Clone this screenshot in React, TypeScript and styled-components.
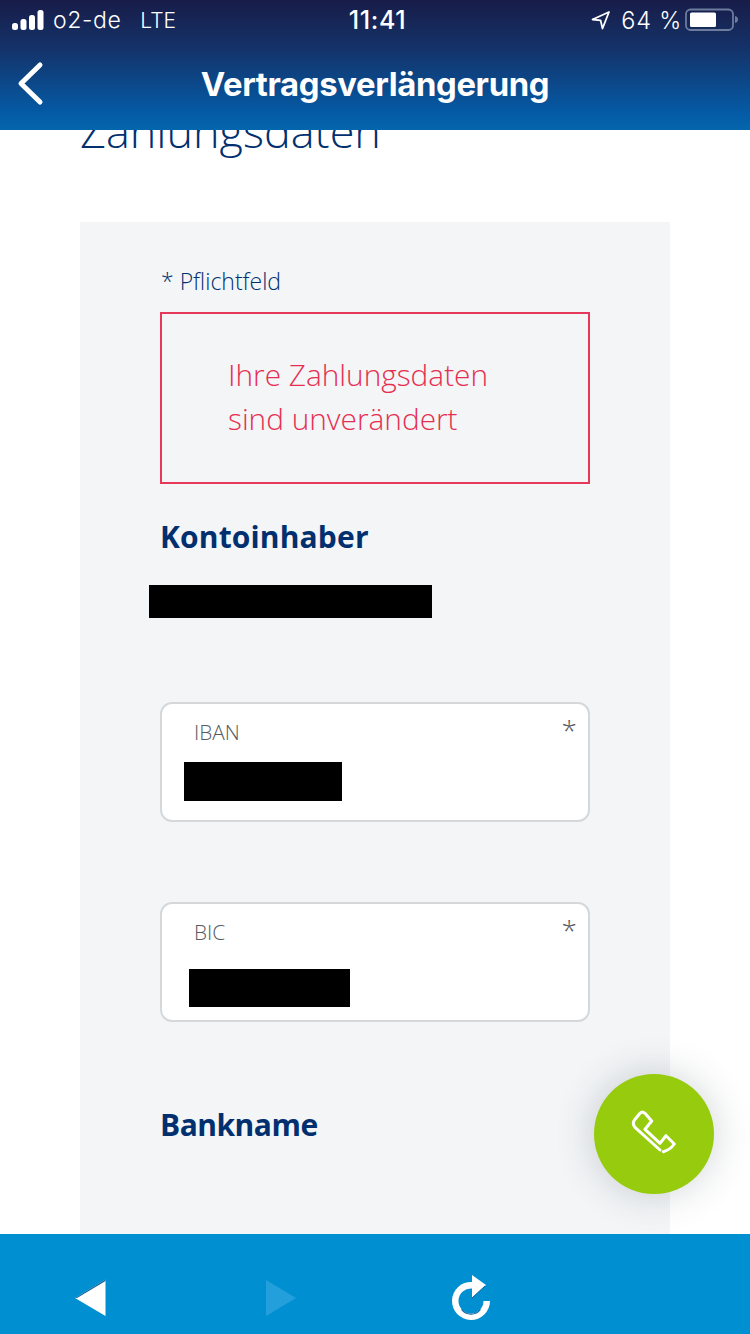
import * as React from "react";
import styled, { createGlobalStyle } from "styled-components";

const GlobalStyle = createGlobalStyle`
  html, body {
    margin: 0;
    padding: 0;
    background: #ffffff;
  }
`;

const Screen = styled.div`
  width: 750px;
  height: 1334px;
  display: flex;
  flex-direction: column;
  overflow: hidden;
  position: relative;
  font-family: "Open Sans", "Noto Sans", sans-serif;
`;

const Header = styled.header`
  height: 130px;
  flex: none;
  position: relative;
  z-index: 2;
  color: #ffffff;
  background: linear-gradient(180deg, #181c48 0%, #14336a 38%, #0559a3 85%, #0466ad 100%);
  font-family: Inter, "Liberation Sans", sans-serif;
`;

const StatusBar = styled.div`
  height: 40px;
  display: grid;
  grid-template-columns: 1fr auto 1fr;
  align-items: center;
  padding: 0 10px 0 12px;
`;

const StatusLeft = styled.div`
  display: flex;
  align-items: center;
`;

const StatusRight = styled.div`
  display: flex;
  align-items: center;
  justify-content: flex-end;
`;

const Carrier = styled.span`
  font-size: 23px;
  font-weight: 300;
  letter-spacing: 0.6px;
  margin-left: 9px;
`;

const Network = styled.span`
  font-size: 21px;
  font-weight: 300;
  margin-left: 19px;
`;

const Clock = styled.span`
  font-size: 25px;
  font-weight: 500;
  letter-spacing: 0.6px;
  margin-left: 3px;
`;

const Percent = styled.span`
  font-size: 23.5px;
  font-weight: 300;
  letter-spacing: 0.8px;
  margin: 0 3px 0 10px;
`;

const NavRow = styled.div`
  height: 90px;
  display: flex;
  align-items: center;
  justify-content: center;
  position: relative;
`;

const BackButton = styled.button`
  position: absolute;
  left: 16px;
  top: 20px;
  width: 30px;
  height: 46px;
  padding: 0;
  border: 0;
  background: none;
  display: flex;
`;

const Title = styled.h1`
  margin: -2px 0 0;
  font-size: 32.85px;
  font-weight: 700;
  letter-spacing: -0.35px;
`;

const Content = styled.main`
  flex: 1;
  min-height: 0;
  overflow: hidden;
  padding: 0 80px;
`;

const PageHeading = styled.h2`
  margin: -30px 0 0;
  height: 122px;
  font-size: 45px;
  line-height: 62px;
  font-weight: 300;
  color: #02306f;
`;

const Panel = styled.section`
  background: #f3f5f7;
  padding: 44px 80px 0;
  height: 1020px;
`;

const RequiredNote = styled.p`
  margin: 0;
  height: 46px;
  padding-left: 1px;
  box-sizing: border-box;
  font-size: 23px;
  line-height: 30px;
  font-weight: 300;
  color: #02306f;
  white-space: pre;
`;

const ErrorBox = styled.div`
  box-sizing: border-box;
  height: 172px;
  border: 2px solid #e6395a;
  padding: 39px 0 0 66px;
  color: #e62f50;
  font-size: 29.8px;
  line-height: 44px;
  font-weight: 300;
`;

const FieldHeading = styled.h3<{ $top: number; $spacing: number }>`
  margin: ${(p) => p.$top}px 0 0;
  font-size: 30px;
  line-height: 42px;
  font-weight: 700;
  letter-spacing: ${(p) => p.$spacing}px;
  color: #02306f;
`;

const Redacted = styled.div<{ $w: number; $h: number; $top: number; $left: number }>`
  width: ${(p) => p.$w}px;
  height: ${(p) => p.$h}px;
  margin: ${(p) => p.$top}px 0 0 ${(p) => p.$left}px;
  background: #000000;
`;

const InputBox = styled.div<{ $top: number }>`
  box-sizing: border-box;
  height: 120px;
  margin-top: ${(p) => p.$top}px;
  background: #ffffff;
  border: 2px solid #d5d8da;
  border-radius: 12px;
  position: relative;
  overflow: hidden;
`;

const InputLabel = styled.div`
  margin: 13px 0 0 32px;
  height: 31px;
  font-size: 20.8px;
  line-height: 30px;
  font-weight: 300;
  color: #555a5e;
`;

const RequiredStar = styled.span`
  position: absolute;
  right: 11px;
  top: 9px;
  font-size: 28px;
  line-height: 34px;
  font-weight: 300;
  color: #555a5e;
`;

const CallButton = styled.button`
  position: absolute;
  left: 594px;
  top: 1074px;
  z-index: 3;
  width: 120px;
  height: 120px;
  padding: 0;
  border: 0;
  border-radius: 50%;
  background: #96cb0e;
  box-shadow: 0 0 38px rgba(60, 70, 80, 0.24);
  display: flex;
  align-items: center;
  justify-content: center;
`;

const BottomBar = styled.nav`
  height: 100px;
  flex: none;
  z-index: 2;
  background: #0090d1;
  display: grid;
  grid-template-columns: repeat(4, 1fr);
  align-items: center;
`;

const BarIcon = styled.div<{ $nudge?: number }>`
  display: flex;
  justify-content: center;
  padding-top: 28px;
  padding-right: ${(p) => p.$nudge ?? 0}px;
`;

const SignalBars = () => (
  <svg width="32" height="21" viewBox="0 0 32 21" fill="#fff">
    <rect x="0" y="13" width="6" height="7" rx="2.5" />
    <rect x="8.5" y="9" width="6" height="11" rx="2.5" />
    <rect x="17" y="5" width="6" height="15" rx="2.5" />
    <rect x="25.5" y="0" width="6" height="20" rx="2.5" />
  </svg>
);

const LocationArrow = () => (
  <svg width="20" height="20" viewBox="0 0 20 20" fill="none" stroke="#fff" strokeWidth="1.8" strokeLinejoin="round">
    <path d="M18 2 1.500 9.500 9.600 10.400 11.500 18.500Z" />
  </svg>
);

const Battery = () => (
  <svg width="55" height="24" viewBox="0 0 55 24">
    <rect x="1" y="1.500" width="47" height="20.500" rx="4.500" fill="none" stroke="#6d7c9c" strokeWidth="1.800" />
    <rect x="5" y="4.500" width="26" height="14.500" rx="1.500" fill="#fff" />
    <path d="M50 8c2 .4 3 1.800 3 3.500s-1 3.100-3 3.500Z" fill="#6d7c9c" />
  </svg>
);

const Chevron = () => (
  <svg width="30" height="46" viewBox="0 0 30 46" fill="none" stroke="#fff" strokeWidth="5" strokeLinecap="round" strokeLinejoin="round">
    <path d="M24 5 5 23.500 24 42" />
  </svg>
);

const PhoneIcon = () => (
  <svg width="50" height="50" viewBox="-2 -2 50 50" fill="none" stroke="#fff" strokeWidth="3" strokeLinecap="round" strokeLinejoin="round">
    <path d="M29 39 4 16.300Q.7 12.300 4 8.300L9 2.300Q11.300 0 14 2.300L20.700 10 14 18.300 29 32.300 35 24.700 43.300 33Q39 39 32.300 40.700" />
  </svg>
);

const BackTriangle = () => (
  <svg width="34" height="40" viewBox="0 0 34 40">
    <path d="M2 20 32.500 1.500V38Z" fill="#ffffff" />
    <path d="M2 20 32.500 1.500V3L4 20Z" fill="#0a5f9c" />
  </svg>
);

const ForwardTriangle = () => (
  <svg width="34" height="40" viewBox="0 0 34 40">
    <path d="M32 20 2 2v36Z" fill="#239fdc" />
  </svg>
);

const ReloadIcon = () => (
  <svg width="42" height="48" viewBox="0 0 42 48">
    <path d="M24 1 38 11 24 24V14.500A12.500 12.500 0 1 0 35.500 27H42A19 19 0 1 1 24 8Z" fill="#ffffff" />
    <path d="M13.500 35.500A12 12 0 0 0 32.500 35.500" fill="none" stroke="#0a5f9c" strokeWidth="1.200" />
    <path d="M24 24 37 12" fill="none" stroke="#0a5f9c" strokeWidth="1" />
  </svg>
);

const App = () => {
  return (
    <Screen>
      <GlobalStyle />
      <Header>
        <StatusBar>
          <StatusLeft>
            <SignalBars />
            <Carrier>o2-de</Carrier>
            <Network>LTE</Network>
          </StatusLeft>
          <Clock>11:41</Clock>
          <StatusRight>
            <LocationArrow />
            <Percent>64 %</Percent>
            <Battery />
          </StatusRight>
        </StatusBar>
        <NavRow>
          <BackButton aria-label="Zurück">
            <Chevron />
          </BackButton>
          <Title>Vertragsverlängerung</Title>
        </NavRow>
      </Header>

      <Content>
        <PageHeading>Zahlungsdaten</PageHeading>
        <Panel>
          <RequiredNote>* Pflichtfeld</RequiredNote>
          <ErrorBox>
            Ihre Zahlungsdaten
            <br />
            sind unverändert
          </ErrorBox>
          <FieldHeading $top={32} $spacing={0.15}>Kontoinhaber</FieldHeading>
          <Redacted $w={283} $h={33} $top={27} $left={-11} />
          <InputBox $top={84}>
            <InputLabel>IBAN</InputLabel>
            <RequiredStar>*</RequiredStar>
            <Redacted $w={158} $h={39} $top={14} $left={22} />
          </InputBox>
          <InputBox $top={80}>
            <InputLabel>BIC</InputLabel>
            <RequiredStar>*</RequiredStar>
            <Redacted $w={161} $h={38} $top={21} $left={27} />
          </InputBox>
          <FieldHeading $top={82} $spacing={-0.5}>Bankname</FieldHeading>
        </Panel>
      </Content>

      <CallButton aria-label="Anrufen">
        <PhoneIcon />
      </CallButton>

      <BottomBar>
        <BarIcon $nudge={7}>
          <BackTriangle />
        </BarIcon>
        <BarIcon>
          <ForwardTriangle />
        </BarIcon>
        <BarIcon>
          <ReloadIcon />
        </BarIcon>
      </BottomBar>
    </Screen>
  );
};

export default App;
